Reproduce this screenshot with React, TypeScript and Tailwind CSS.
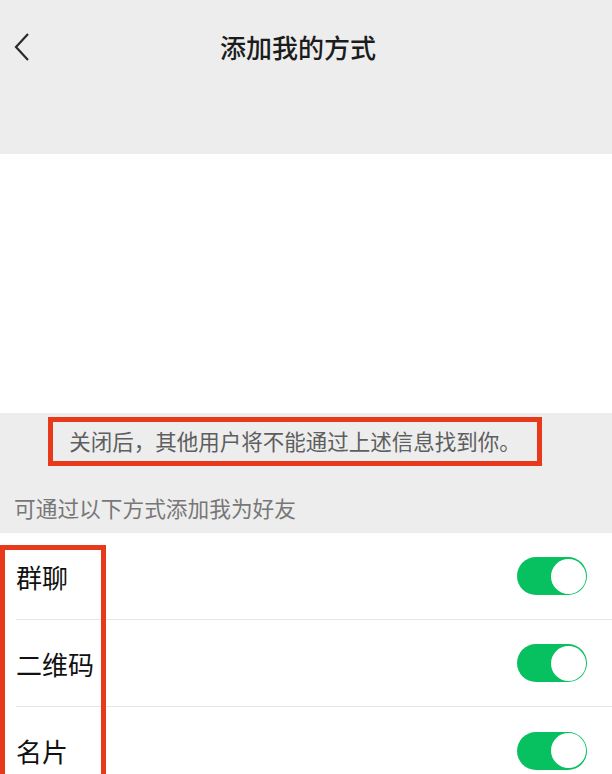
const font = { fontFamily: '"Noto Sans CJK SC", "Noto Sans", sans-serif' };

const options = ["群聊", "二维码", "名片"];

function Toggle() {
  return (
    <div className="flex h-[38px] w-[70px] items-center justify-end rounded-full bg-[#07c160] p-[1.5px]">
      <div className="h-[35px] w-[35px] rounded-full bg-white" />
    </div>
  );
}

export default function App() {
  return (
    <div className="relative h-[774px] w-[612px] overflow-hidden bg-[#ededed]" style={font}>
      <div className="h-[154px]">
        <div className="relative flex h-[92px] items-center justify-center pr-[16px]">
          <svg
            className="absolute left-[12px] top-[32px]"
            width="20"
            height="30"
            viewBox="0 0 20 30"
            fill="none"
          >
            <path d="M16 2 L4 15 L16 28" stroke="#2a2a2a" strokeWidth="2.2" />
          </svg>
          <h1 className="text-[26px] font-medium text-[#1c1c1c]">添加我的方式</h1>
        </div>
      </div>

      <div className="h-[259px] bg-white" />

      <div className="h-[120px] pt-[4px]">
        <div className="ml-[48px] flex h-[49px] w-[494px] items-center justify-center border-[5px] border-[#e8391d]">
          <p className="text-[21.5px] text-[#5e5e5e]">关闭后，其他用户将不能通过上述信息找到你。</p>
        </div>
        <p className="mt-[26px] pl-[14px] text-[21.7px] text-[#777]">可通过以下方式添加我为好友</p>
      </div>

      <div className="bg-white">
        {options.map((label, i) => (
          <div key={label} className="pl-[16px]">
            <div
              className={
                "flex h-[87px] items-center justify-between pr-[25px] " +
                (i < options.length - 1 ? "border-b border-[#e6e6e6]" : "")
              }
            >
              <span className="text-[26px] text-[#111]">{label}</span>
              <Toggle />
            </div>
          </div>
        ))}
      </div>

      <div className="absolute left-0 top-[545px] h-[260px] w-[106px] border-[5px] border-[#e8391d]" />
    </div>
  );
}
